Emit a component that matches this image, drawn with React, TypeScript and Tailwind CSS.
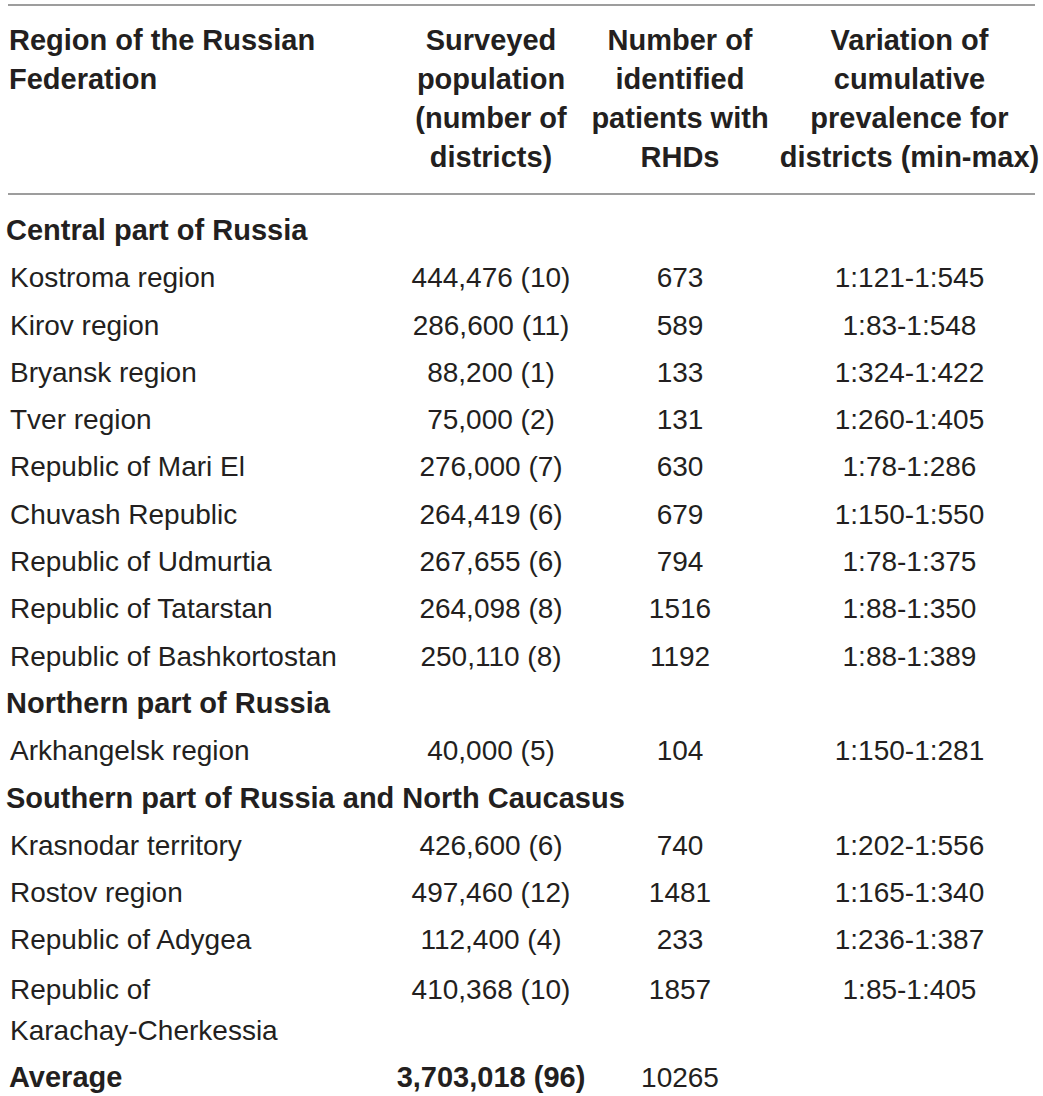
import React from "react";

type Row = {
  region: string[];
  pop: string;
  patients: string;
  range: string;
};

type Section = {
  title: string;
  rows: Row[];
};

const sections: Section[] = [
  {
    title: "Central part of Russia",
    rows: [
      { region: ["Kostroma region"], pop: "444,476 (10)", patients: "673", range: "1:121-1:545" },
      { region: ["Kirov region"], pop: "286,600 (11)", patients: "589", range: "1:83-1:548" },
      { region: ["Bryansk region"], pop: "88,200 (1)", patients: "133", range: "1:324-1:422" },
      { region: ["Tver region"], pop: "75,000 (2)", patients: "131", range: "1:260-1:405" },
      { region: ["Republic of Mari El"], pop: "276,000 (7)", patients: "630", range: "1:78-1:286" },
      { region: ["Chuvash Republic"], pop: "264,419 (6)", patients: "679", range: "1:150-1:550" },
      { region: ["Republic of Udmurtia"], pop: "267,655 (6)", patients: "794", range: "1:78-1:375" },
      { region: ["Republic of Tatarstan"], pop: "264,098 (8)", patients: "1516", range: "1:88-1:350" },
      { region: ["Republic of Bashkortostan"], pop: "250,110 (8)", patients: "1192", range: "1:88-1:389" },
    ],
  },
  {
    title: "Northern part of Russia",
    rows: [{ region: ["Arkhangelsk region"], pop: "40,000 (5)", patients: "104", range: "1:150-1:281" }],
  },
  {
    title: "Southern part of Russia and North Caucasus",
    rows: [
      { region: ["Krasnodar territory"], pop: "426,600 (6)", patients: "740", range: "1:202-1:556" },
      { region: ["Rostov region"], pop: "497,460 (12)", patients: "1481", range: "1:165-1:340" },
      { region: ["Republic of Adygea"], pop: "112,400 (4)", patients: "233", range: "1:236-1:387" },
      {
        region: ["Republic of", "Karachay-Cherkessia"],
        pop: "410,368 (10)",
        patients: "1857",
        range: "1:85-1:405",
      },
    ],
  },
];

const grid = "grid grid-cols-[384px_198px_180px_273px] w-[1035px]";

const Lines = ({ lines }: { lines: string[] }) => (
  <>
    {lines.map((l, i) => (
      <React.Fragment key={i}>
        {i > 0 && <br />}
        {l}
      </React.Fragment>
    ))}
  </>
);

export default function App() {
  return (
    <div
      className="bg-white min-h-[1096px] pt-[4px] pl-[8px] text-[28px] text-[#231f20] overflow-hidden"
      style={{ fontFamily: '"Liberation Sans", Arial, Helvetica, sans-serif' }}
    >
      <div className="w-[1027px] h-[2px] bg-[#9d9d9d]" />
      <div className={`${grid} font-bold text-[29px] leading-[39px] pt-[15px] pb-[16px] whitespace-nowrap`}>
        <div className="pl-[1px]">
          <Lines lines={["Region of the Russian", "Federation"]} />
        </div>
        <div className="text-center">
          <Lines lines={["Surveyed", "population", "(number of", "districts)"]} />
        </div>
        <div className="text-center">
          <Lines lines={["Number of", "identified", "patients with", "RHDs"]} />
        </div>
        <div className="text-center pl-[6px]">
          <Lines lines={["Variation of", "cumulative", "prevalence for", "districts (min-max)"]} />
        </div>
      </div>
      <div className="w-[1027px] h-[2px] bg-[#9d9d9d]" />

      <div className="pt-[12px] leading-[39.3px] whitespace-nowrap">
        {sections.map((s) => (
          <React.Fragment key={s.title}>
            <div className="py-[4px] font-bold text-[29px] -ml-[2px]">{s.title}</div>
            {s.rows.map((r) => (
              <div
                key={r.region.join(" ")}
                className={
                  r.region.length > 1
                    ? `${grid} pt-[5px] pb-[3px] leading-[41px]`
                    : `${grid} py-[4px]`
                }
              >
                <div className="pl-[2px]">
                  <Lines lines={r.region} />
                </div>
                <div className="text-center">{r.pop}</div>
                <div className="text-center">{r.patients}</div>
                <div className="text-center pl-[6px]">{r.range}</div>
              </div>
            ))}
          </React.Fragment>
        ))}
        <div className={`${grid} py-[4px]`}>
          <div className="pl-[1px] font-bold text-[29px]">Average</div>
          <div className="text-center font-bold text-[29px]">3,703,018 (96)</div>
          <div className="text-center">10265</div>
          <div className="pl-[6px]" />
        </div>
      </div>
    </div>
  );
}
